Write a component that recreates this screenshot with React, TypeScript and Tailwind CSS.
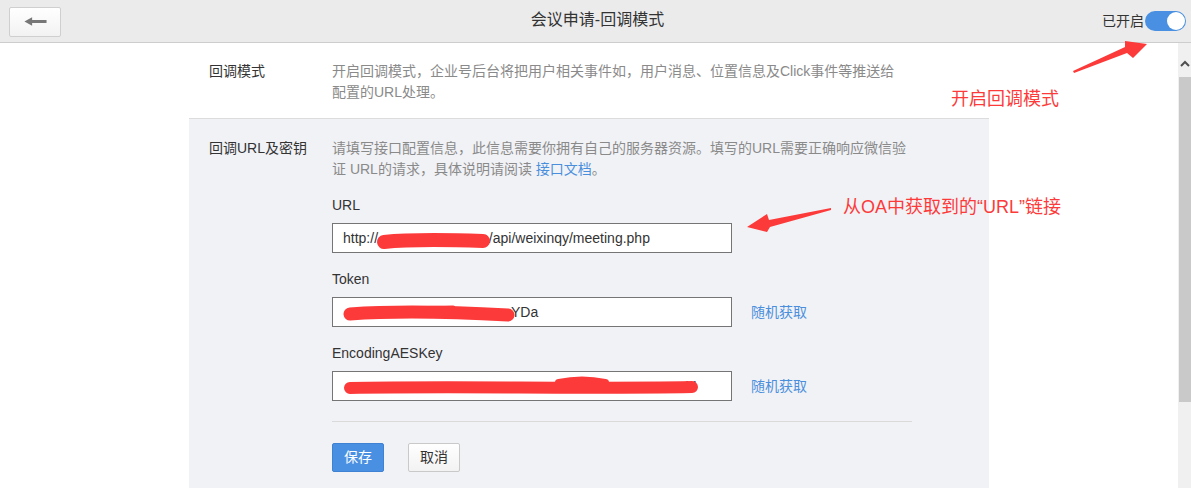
import React from "react";

const FONT = { fontFamily: '"Liberation Sans", "Noto Sans CJK SC", sans-serif' };

function BackButton() {
  return (
    <button className="w-[52px] h-[30px] mt-[1px] border border-[#cfcfcf] rounded-[2px] bg-gradient-to-b from-[#ffffff] to-[#f2f2f2] flex items-center justify-center">
      <svg width="52" height="30" viewBox="0 0 52 30">
        <polygon points="15,14.5 23,10 23,13 38,13 38,16 23,16 23,19" fill="#777777" />
      </svg>
    </button>
  );
}

function Toggle() {
  return (
    <div className="w-[41px] h-[20px] rounded-full bg-[#4a90e2] flex items-center justify-end pr-[1px]">
      <div className="w-[18px] h-[18px] rounded-full bg-white" />
    </div>
  );
}

function FieldLabel({ children }: { children: React.ReactNode }) {
  return <div className="text-[14px] leading-[21px] text-[#333333] mb-[7px]">{children}</div>;
}

function InputBox({ children, overlay }: { children: React.ReactNode; overlay?: React.ReactNode }) {
  return (
    <div className="relative w-[400px] h-[30px] border border-[#757575] bg-white flex items-center pl-[10px] text-[14px] text-[#333333] whitespace-nowrap overflow-hidden">
      {children}
      {overlay ? (
        <svg className="absolute left-0 top-0 pointer-events-none" width="400" height="30" viewBox="0 0 400 30">
          {overlay}
        </svg>
      ) : null}
    </div>
  );
}

function RandomLink() {
  return <span className="ml-[19px] text-[14px] text-[#4a8fdc]">随机获取</span>;
}

export default function App() {
  return (
    <div className="relative w-[1191px] h-[488px] overflow-hidden bg-white" style={FONT}>
      <header className="h-[43px] bg-[#ebebeb] border-b border-[#cdcdcd] grid grid-cols-[1fr_auto_1fr] items-center pl-[9px] pr-[5px]">
        <div className="flex items-center">
          <BackButton />
        </div>
        <div className="text-[16px] text-[#333333] leading-[20px] -mt-[2px]">会议申请-回调模式</div>
        <div className="flex items-center justify-end">
          <span className="text-[14px] text-[#333333] leading-[20px] mr-[1px]">已开启</span>
          <Toggle />
        </div>
      </header>

      <div className="flex h-[445px]">
        <main className="flex-1 overflow-hidden">
          <div className="ml-[189px] w-[800px]">
            <section className="h-[76px] border-b border-[#dcdcdc] flex pt-[18px] pl-[20px]">
              <div className="w-[123px] text-[14px] leading-[21px] text-[#333333]">回调模式</div>
              <p className="text-[14px] leading-[21px] text-[#8a8a8a] whitespace-nowrap">
                开启回调模式，企业号后台将把用户相关事件如，用户消息、位置信息及Click事件等推送给
                <br />
                配置的URL处理。
              </p>
            </section>

            <section className="h-[369px] bg-[#f1f2f6] flex pt-[19px] pl-[20px]">
              <div className="w-[123px] text-[14px] leading-[21px] text-[#333333]">回调URL及密钥</div>
              <div className="flex flex-col">
                <p className="text-[14px] leading-[21px] text-[#8a8a8a] whitespace-nowrap">
                  请填写接口配置信息，此信息需要你拥有自己的服务器资源。填写的URL需要正确响应微信验
                  <br />
                  证 URL的请求，具体说明请阅读 <span className="text-[#4a8fdc]">接口文档</span>。
                </p>

                <div className="mt-[15px]">
                  <FieldLabel>URL</FieldLabel>
                  <InputBox
                    overlay={
                      <>
                        <path d="M51 18 C 80 15, 120 16, 150 17" stroke="#fd3a3a" strokeWidth="14" strokeLinecap="round" fill="none" />
                      </>
                    }
                  >
                    <span>http://</span>
                    <span className="inline-block w-[103px]" />
                    <span>a/api/weixinqy/meeting.php</span>
                  </InputBox>
                </div>

                <div className="mt-[16px]">
                  <FieldLabel>Token</FieldLabel>
                  <div className="flex items-center">
                    <InputBox
                      overlay={
                        <>
                          <path d="M17 16 C 60 13, 120 14, 175 17" stroke="#fd3a3a" strokeWidth="13" strokeLinecap="round" fill="none" />
                          <path d="M70 11 L 120 10" stroke="#fd3a3a" strokeWidth="5" strokeLinecap="round" fill="none" />
                        </>
                      }
                    >
                      <span className="inline-block w-[168px]" />
                      <span>YDa</span>
                    </InputBox>
                    <RandomLink />
                  </div>
                </div>

                <div className="mt-[16px]">
                  <FieldLabel>EncodingAESKey</FieldLabel>
                  <div className="flex items-center">
                    <InputBox
                      overlay={
                        <>
                          <path d="M17 16 C 120 14, 250 17, 359 15" stroke="#fd3a3a" strokeWidth="12" strokeLinecap="round" fill="none" />
                          <path d="M226 11 C 240 8, 258 8, 272 11" stroke="#fd3a3a" strokeWidth="8" strokeLinecap="round" fill="none" />
                        </>
                      }
                    >
                      <span className="inline-block w-[342px]" />
                      <span className="text-[#555555]">M</span>
                    </InputBox>
                    <RandomLink />
                  </div>
                </div>

                <div className="mt-[20px] w-[580px] border-t border-[#dadada]" />

                <div className="mt-[21px] flex gap-[24px]">
                  <button className="w-[52px] h-[29px] rounded-[2px] bg-[#4a90e2] border border-[#3f82d3] text-white text-[14px]">保存</button>
                  <button className="w-[52px] h-[29px] rounded-[2px] bg-gradient-to-b from-[#ffffff] to-[#f2f2f2] border border-[#c9c9c9] text-[#333333] text-[14px]">取消</button>
                </div>
              </div>
            </section>
          </div>
        </main>

        <aside className="w-[13px] bg-[#f0f0f0] flex flex-col">
          <div className="h-[34px] flex justify-center pt-[17px]">
            <svg width="10" height="7" viewBox="0 0 10 7">
              <polyline points="1,6 5,2 9,6" stroke="#505050" strokeWidth="2" fill="none" />
            </svg>
          </div>
          <div className="ml-[1px] h-[325px] bg-[#c9c9c9]" />
        </aside>
      </div>

      <svg className="absolute left-0 top-0 pointer-events-none" width="1191" height="488" viewBox="0 0 1191 488">
        <polygon points="1074,73 1127,53 1133,58 1147,44 1125,41 1125,47 1073,71" fill="#fd3a3a" />
        <polygon points="831,208 769,220 767,214 747,227 767,232 770,227 831,210" fill="#fd3a3a" />
      </svg>
      <div className="absolute left-[951px] top-[87px] text-[18px] leading-[24px] text-[#fd3a3a]">开启回调模式</div>
      <div className="absolute left-[843px] top-[195px] text-[18px] leading-[24px] text-[#fd3a3a] whitespace-nowrap">从OA中获取到的“URL”链接</div>
    </div>
  );
}
